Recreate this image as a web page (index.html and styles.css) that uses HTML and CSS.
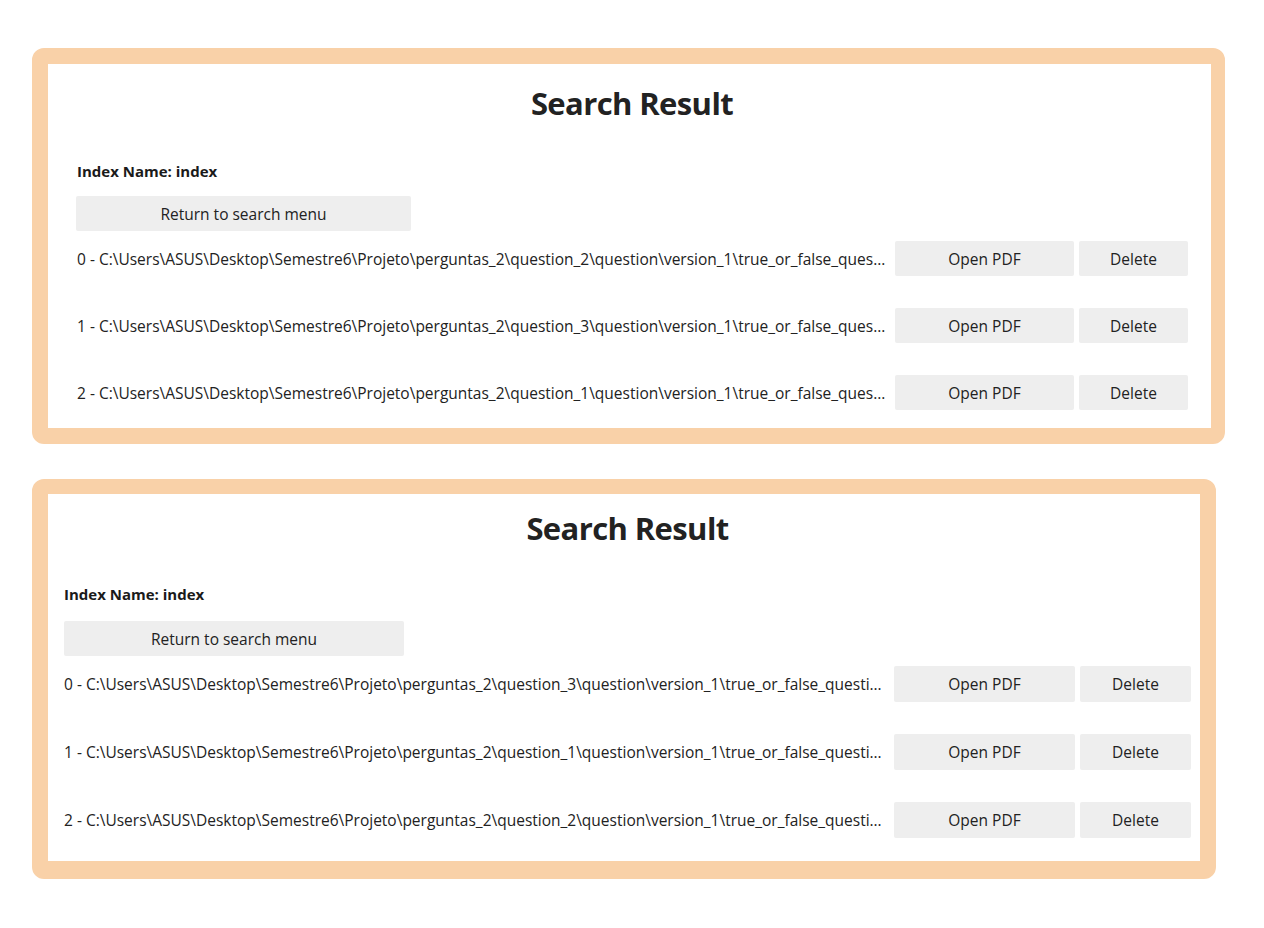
FILE: index.html
```html
<!DOCTYPE html>
<html lang="en">
<head>
<meta charset="utf-8">
<title>Search Result</title>
<link rel="stylesheet" href="styles.css">
</head>
<body>
<main class="page">
  <section class="panel panel-a">
    <h1 class="title">Search Result</h1>
    <p class="index-name">Index Name: index</p>
    <button class="btn btn-return">Return to search menu</button>
    <ul class="results">
      <li class="result">
        <span class="path">0 - C:\Users\ASUS\Desktop\Semestre6\Projeto\perguntas_2\question_2\question\version_1\true_or_false_question_2_version_1.pdf</span>
        <button class="btn btn-open">Open PDF</button>
        <button class="btn btn-delete">Delete</button>
      </li>
      <li class="result">
        <span class="path">1 - C:\Users\ASUS\Desktop\Semestre6\Projeto\perguntas_2\question_3\question\version_1\true_or_false_question_3_version_1.pdf</span>
        <button class="btn btn-open">Open PDF</button>
        <button class="btn btn-delete">Delete</button>
      </li>
      <li class="result">
        <span class="path">2 - C:\Users\ASUS\Desktop\Semestre6\Projeto\perguntas_2\question_1\question\version_1\true_or_false_question_1_version_1.pdf</span>
        <button class="btn btn-open">Open PDF</button>
        <button class="btn btn-delete">Delete</button>
      </li>
    </ul>
  </section>

  <section class="panel panel-b">
    <h1 class="title">Search Result</h1>
    <p class="index-name">Index Name: index</p>
    <button class="btn btn-return">Return to search menu</button>
    <ul class="results">
      <li class="result">
        <span class="path">0 - C:\Users\ASUS\Desktop\Semestre6\Projeto\perguntas_2\question_3\question\version_1\true_or_false_question_3_version_1.pdf</span>
        <button class="btn btn-open">Open PDF</button>
        <button class="btn btn-delete">Delete</button>
      </li>
      <li class="result">
        <span class="path">1 - C:\Users\ASUS\Desktop\Semestre6\Projeto\perguntas_2\question_1\question\version_1\true_or_false_question_1_version_1.pdf</span>
        <button class="btn btn-open">Open PDF</button>
        <button class="btn btn-delete">Delete</button>
      </li>
      <li class="result">
        <span class="path">2 - C:\Users\ASUS\Desktop\Semestre6\Projeto\perguntas_2\question_2\question\version_1\true_or_false_question_2_version_1.pdf</span>
        <button class="btn btn-open">Open PDF</button>
        <button class="btn btn-delete">Delete</button>
      </li>
    </ul>
  </section>
</main>
</body>
</html>
```
FILE: styles.css
```css
html, body {
  margin: 0;
  padding: 0;
  background: #ffffff;
}

body {
  font-family: "Open Sans", "Noto Sans", "Liberation Sans", sans-serif;
  color: #222222;
}

.page {
  display: flex;
  flex-direction: column;
  align-items: flex-start;
  gap: 35px;
  padding: 48px 0 48px 32px;
}

.panel {
  box-sizing: border-box;
  border: 16px solid #f9d1a8;
  border-radius: 12px;
  background: #ffffff;
  display: flex;
  flex-direction: column;
}

.panel-a {
  width: 1193px;
  border-right-width: 14px;
  padding: 19px 23px 18px 28px;
}

.panel-b {
  width: 1184px;
  padding: 14px 9px 23px 16px;
  border-width: 15px 16px 18px 16px;
}

.title {
  margin: 0;
  font-size: 31px;
  line-height: 40px;
  font-weight: 700;
  letter-spacing: -0.6px;
  text-align: center;
  color: #222222;
}

.index-name {
  margin: 38px 0 0 1px;
  font-size: 15px;
  line-height: 20px;
  font-weight: 700;
  color: #1a1a1a;
}

.panel-b .index-name {
  margin: 36px 0 0;
}

.btn {
  font-family: inherit;
  font-size: 15.5px;
  color: #222222;
  background: #eeeeee;
  border: none;
  border-radius: 2px;
  padding: 0;
  margin: 0;
  cursor: pointer;
}

.btn-return {
  margin-top: 15px;
  width: 335px;
  height: 35px;
}

.panel-b .btn-return {
  margin-top: 17px;
  width: 340px;
}

.results {
  list-style: none;
  margin: 10px 0 0;
  padding: 0;
  display: flex;
  flex-direction: column;
  gap: 32px;
}

.result {
  display: flex;
  align-items: center;
  gap: 5px;
  height: 35px;
}

.panel-a .result {
  padding-left: 1px;
}

.panel-b .result {
  height: 36px;
}

.path {
  flex: 1;
  min-width: 0;
  margin-right: 2px;
  white-space: nowrap;
  overflow: hidden;
  text-overflow: ellipsis;
  font-size: 15.5px;
  line-height: 20px;
  color: #222222;
}

.btn-open {
  width: 179px;
  height: 35px;
}

.btn-delete {
  width: 109px;
  height: 35px;
}

.panel-b .btn-open {
  width: 181px;
  height: 36px;
}

.panel-b .btn-delete {
  width: 111px;
  height: 36px;
}
```
